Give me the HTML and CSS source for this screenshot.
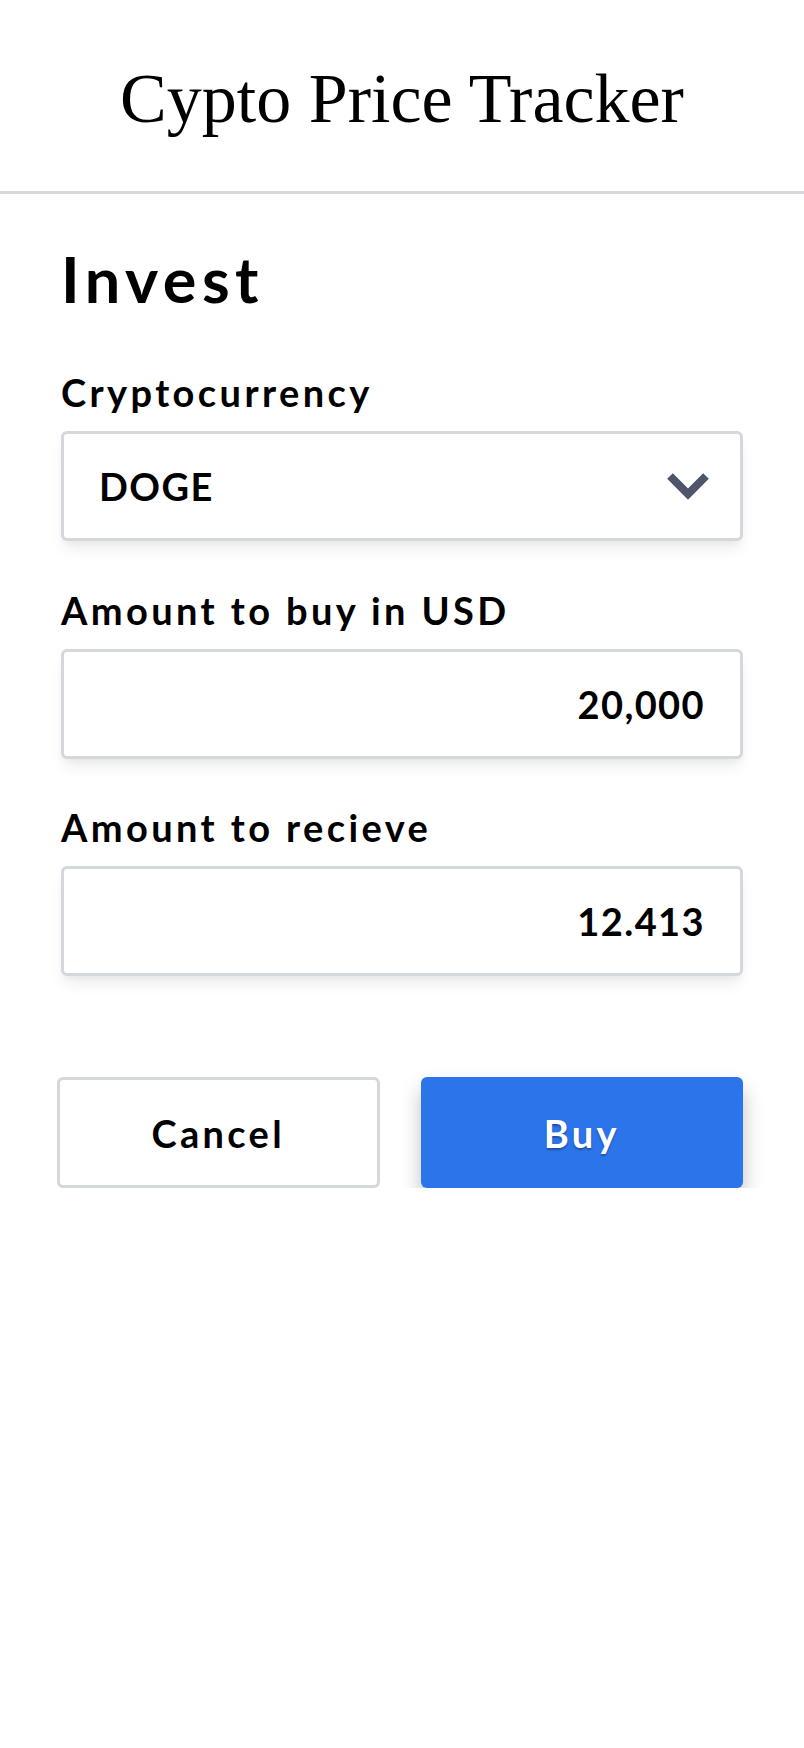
FILE: index.html
```html
<!DOCTYPE html>
<html lang="en">
<head>
<meta charset="utf-8">
<title>Cypto Price Tracker</title>
<link rel="stylesheet" href="styles.css">
</head>
<body>
<header class="app-header">
  <h1 class="app-title">Cypto Price Tracker</h1>
</header>
<main class="invest">
  <h2 class="invest-title">Invest</h2>
  <div class="field">
    <label class="field-label">Cryptocurrency</label>
    <div class="control control-select">
      <span class="select-value">DOGE</span>
      <svg class="chevron" viewBox="0 0 42 27" width="42" height="27" aria-hidden="true">
        <polyline points="3,3 21,21 39,3" fill="none" stroke="#4f566b" stroke-width="8" stroke-linejoin="miter" stroke-linecap="butt"/>
      </svg>
    </div>
  </div>
  <div class="field">
    <label class="field-label">Amount to buy in USD</label>
    <div class="control control-number">20,000</div>
  </div>
  <div class="field">
    <label class="field-label">Amount to recieve</label>
    <div class="control control-number">12.413</div>
  </div>
  <div class="actions">
    <button class="btn btn-cancel" type="button">Cancel</button>
    <button class="btn btn-buy" type="button">Buy</button>
  </div>
</main>
</body>
</html>
```
FILE: styles.css
```css
* { box-sizing: border-box; }

html, body {
  margin: 0;
  padding: 0;
  background: #ffffff;
}

body {
  font-family: Lato, "Noto Sans", sans-serif;
  color: #000000;
}

.app-header {
  padding: 60px 0 53px;
  border-bottom: 3px solid #d4d7dc;
  text-align: center;
}

.app-title {
  margin: 0;
  font-family: "Liberation Serif", "Times New Roman", serif;
  font-weight: 400;
  font-size: 70px;
  line-height: 78px;
}

.invest {
  padding: 0 61px;
}

.invest-title {
  margin: 46.5px 0 0;
  font-size: 63px;
  font-weight: 700;
  letter-spacing: 5.5px;
  line-height: 76px;
}

.field {
  display: flex;
  flex-direction: column;
  margin-top: 45.5px;
}

.invest-title + .field {
  margin-top: 52.5px;
}

.field-label {
  font-size: 38px;
  font-weight: 700;
  letter-spacing: 3.4px;
  line-height: 46px;
  margin-bottom: 16px;
}

.control {
  height: 110px;
  border: 3px solid #d4d7dc;
  border-radius: 6px;
  background: #fff;
  box-shadow: 0 10px 15px -3px rgba(0, 0, 0, 0.08), 0 4px 6px -2px rgba(0, 0, 0, 0.04);
  font-size: 38px;
  font-weight: 700;
  letter-spacing: 1.4px;
  display: flex;
  align-items: center;
}

.control-select {
  justify-content: space-between;
  padding: 0 31px 0 35px;
}

.chevron {
  display: block;
}

.control-number {
  justify-content: flex-end;
  padding: 0 35px;
}

.actions {
  display: grid;
  grid-template-columns: 1fr 1fr;
  column-gap: 41px;
  margin: 101px 0 0 -4px;
}

.btn {
  height: 111px;
  border-radius: 6px;
  font-family: Lato, "Noto Sans", sans-serif;
  font-size: 38px;
  font-weight: 700;
  letter-spacing: 3.3px;
  cursor: pointer;
}

.btn-cancel {
  background: #fff;
  border: 3px solid #d4d7dc;
  color: #000;
}

.btn-buy {
  background: #2b74ea;
  border: none;
  color: #fff;
  text-shadow: 0 2px 2px rgba(0, 0, 0, 0.3);
  box-shadow: 0 12px 20px rgba(0, 0, 0, 0.25);
}
```
